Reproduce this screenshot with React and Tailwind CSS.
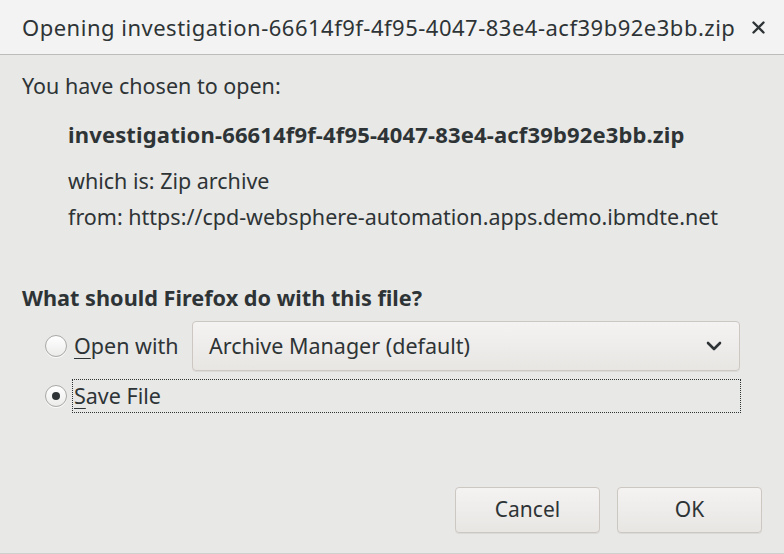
function Radio({ checked }) {
  return (
    <div className="w-[22px] h-[22px] rounded-full border border-[#a8a8a6] bg-gradient-to-b from-white to-[#ececeb] shadow-[0_1px_0_rgba(255,255,255,0.8)] flex items-center justify-center shrink-0">
      {checked && <div className="w-[8px] h-[8px] rounded-full bg-[#2e3436]" />}
    </div>
  );
}

function Button({ children }) {
  return (
    <button className="w-[145px] h-[46px] rounded-[4px] border border-[#cdc7c2] bg-gradient-to-b from-[#f4f3f2] to-[#e8e6e3] shadow-[0_1px_0_rgba(0,0,0,0.06)] text-[21px] text-[#2e3436]">
      {children}
    </button>
  );
}

export default function App() {
  return (
    <div
      className="w-[784px] h-[554px] bg-[#e8e8e7] flex flex-col border-b border-[#cfcfcd] text-[#2e3436] overflow-hidden"
      style={{ fontFamily: '"Noto Sans", "Open Sans", sans-serif' }}
    >
      {/* Title bar */}
      <div className="h-[55px] shrink-0 bg-[#f3f3f3] border-b border-[#bcbcbb] flex items-center pl-[22px] pr-[19px]">
        <div className="flex-1 text-[22px] whitespace-nowrap tracking-[0.5px]">
          Opening investigation-66614f9f-4f95-4047-83e4-acf39b92e3bb.zip
        </div>
        <svg width="13" height="13" viewBox="0 0 13 13" className="shrink-0">
          <path d="M1.5 1.5 L11.5 11.5 M11.5 1.5 L1.5 11.5" stroke="#2e3436" strokeWidth="2.4" strokeLinecap="round" />
        </svg>
      </div>

      {/* Body */}
      <div className="flex flex-col pl-[22px] pr-[22px] text-[21.5px]">
        <div className="h-[63px] flex items-center">You have chosen to open:</div>
        <div className="h-[32px] flex items-center pl-[46px] text-[22px] font-bold whitespace-nowrap tracking-[0.15px]">
          investigation-66614f9f-4f95-4047-83e4-acf39b92e3bb.zip
        </div>
        <div className="mt-[15px] h-[32px] flex items-center pl-[46px]">which is: Zip archive</div>
        <div className="mt-[4px] h-[32px] flex items-center pl-[46px] whitespace-nowrap">
          from: https://cpd-websphere-automation.apps.demo.ibmdte.net
        </div>

        <div className="mt-[49px] h-[32px] flex items-center text-[21.7px] font-bold">
          What should Firefox do with this file?
        </div>

        <div className="mt-[7px] h-[50px] flex items-center pl-[23px]">
          <Radio />
          <div className="ml-[7px] w-[118px]">
            <span className="underline underline-offset-[4px] decoration-1">O</span>pen with
          </div>
          <div className="w-[548px] h-[50px] rounded-[4px] border border-[#cdc7c2] bg-gradient-to-b from-[#f4f3f2] to-[#e8e6e3] shadow-[0_1px_0_rgba(0,0,0,0.06)] flex items-center pl-[16px] pr-[17px]">
            <span className="flex-1">Archive Manager (default)</span>
            <svg width="16" height="10" viewBox="0 0 16 10">
              <path d="M2 2 L8 8 L14 2" fill="none" stroke="#2e3436" strokeWidth="2.6" strokeLinecap="round" strokeLinejoin="round" />
            </svg>
          </div>
        </div>

        <div className="mt-[8px] h-[34px] flex items-center pl-[23px]">
          <Radio checked />
          <div className="ml-[5px] w-[669px] h-[34px] border border-dotted border-[#2e3436] flex items-center pl-[1px]">
            <span className="underline underline-offset-[4px] decoration-1">S</span>ave File
          </div>
        </div>

        <div className="mt-[74px] h-[46px] flex justify-end gap-[17px]">
          <Button>Cancel</Button>
          <Button>OK</Button>
        </div>
      </div>
    </div>
  );
}
